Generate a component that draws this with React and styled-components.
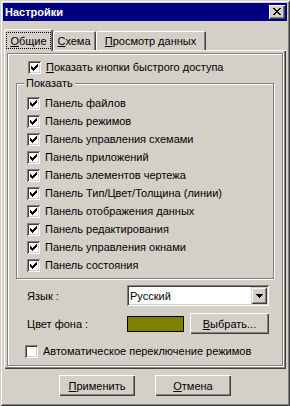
import React from 'react';
import styled, { createGlobalStyle } from 'styled-components';

const GlobalStyle = createGlobalStyle`
  html, body {
    margin: 0;
    padding: 0;
    background: #d4d0c8;
  }
  body {
    font-family: "Liberation Sans", Arial, sans-serif;
    font-size: 11px;
    color: #000;
  }
`;

const raised = `
  box-shadow: inset 1px 1px #fff, inset -1px -1px #404040, inset -2px -2px #808080;
`;
const sunken = `
  box-shadow: inset 1px 1px #808080, inset -1px -1px #fff, inset 2px 2px #404040, inset -2px -2px #d4d0c8;
`;
const etched = `
  border: 1px solid #808080;
  box-shadow: inset 1px 1px #fff, 1px 1px #fff;
`;

const Window = styled.div`
  width: 290px;
  height: 406px;
  box-sizing: border-box;
  padding: 3px;
  background: #d4d0c8;
  box-shadow: inset 1px 1px #d4d0c8, inset -1px -1px #404040, inset 2px 2px #fff, inset -2px -2px #808080;
  display: flex;
  flex-direction: column;
`;

const TitleBar = styled.div`
  height: 18px;
  background: #000080;
  display: flex;
  align-items: center;
  justify-content: space-between;
  padding: 0 2px;
`;

const Title = styled.span`
  color: #fff;
  font-weight: bold;
  font-size: 11px;
`;

const CloseButton = styled.div`
  width: 16px;
  height: 14px;
  background: #d4d0c8;
  ${raised}
  display: flex;
  align-items: center;
  justify-content: center;
  padding-bottom: 1px;
  box-sizing: border-box;
`;

const TabArea = styled.div`
  margin: 8px 1px 0 1px;
  display: flex;
  flex-direction: column;
`;

const TabStrip = styled.div`
  height: 21px;
  display: flex;
  align-items: flex-end;
`;

const Tab = styled.div`
  position: relative;
  z-index: ${p => (p.$active ? 1 : 0)};
  box-sizing: border-box;
  width: ${p => p.$w}px;
  height: ${p => (p.$active ? 22 : 19)}px;
  margin-bottom: ${p => (p.$active ? -1 : 0)}px;
  background: #d4d0c8;
  border-radius: 2px 2px 0 0;
  box-shadow: inset 1px 1px #fff, inset -1px 0 #404040, inset -2px 0 #808080;
  display: flex;
  padding: ${p => (p.$active ? '3px 2px 2px 2px' : '1px 2px 0 1px')};
`;

const TabLabel = styled.span`
  flex: 1;
  display: flex;
  align-items: center;
  justify-content: center;
  border: 1px dotted ${p => (p.$focused ? '#000' : 'transparent')};
`;

const U = styled.span`
  text-decoration: underline;
`;

const Panel = styled.div`
  box-sizing: border-box;
  height: 319px;
  padding: 3px;
  ${raised}
  display: flex;
`;

const Frame = styled.div`
  flex: 1;
  ${etched}
  display: flex;
  flex-direction: column;
`;

const CheckRow = styled.label`
  height: 18px;
  display: flex;
  align-items: center;
  gap: 5px;
  padding-left: ${p => p.$indent || 0}px;
  margin-top: ${p => p.$top || 0}px;
  white-space: nowrap;
`;

const Box = styled.span`
  width: 13px;
  height: 13px;
  flex: none;
  box-sizing: border-box;
  background: #fff;
  ${sunken}
  display: flex;
  align-items: center;
  justify-content: center;
`;

const Group = styled.div`
  position: relative;
  margin: 7px 8px 0 8px;
  padding: 10px 0 4px 10px;
  ${etched}
`;

const GroupLabel = styled.span`
  position: absolute;
  top: -7px;
  left: 7px;
  padding: 0 2px;
  line-height: 13px;
  background: #d4d0c8;
`;

const FieldRow = styled.div`
  height: 21px;
  display: flex;
  align-items: center;
  padding-left: 19px;
  margin-top: ${p => p.$top}px;
`;

const FieldLabel = styled.span`
  width: 100px;
  flex: none;
`;

const Select = styled.div`
  width: 142px;
  height: 21px;
  box-sizing: border-box;
  background: #fff;
  ${sunken}
  display: flex;
  align-items: center;
  padding: 2px;
`;

const SelectText = styled.span`
  flex: 1;
  padding-left: 1px;
`;

const DropButton = styled.div`
  width: 16px;
  height: 17px;
  box-sizing: border-box;
  background: #d4d0c8;
  box-shadow: inset 1px 1px #d4d0c8, inset -1px -1px #404040, inset 2px 2px #fff, inset -2px -2px #808080;
  display: flex;
  align-items: center;
  justify-content: center;
`;

const Swatch = styled.div`
  width: 57px;
  height: 16px;
  box-sizing: border-box;
  border: 1px solid #000;
  background: #808000;
`;

const Button = styled.div`
  width: ${p => p.$w}px;
  height: ${p => p.$h || 21}px;
  margin-left: ${p => p.$left || 0}px;
  box-sizing: border-box;
  background: #d4d0c8;
  ${raised}
  display: flex;
  align-items: center;
  justify-content: center;
`;

const Footer = styled.div`
  margin-top: 6px;
  display: flex;
  justify-content: center;
  gap: 20px;
`;

const Pixels = ({ rows, color = '#000' }) => (
  <svg width={rows[0].length} height={rows.length} shapeRendering="crispEdges">
    {rows.flatMap((r, y) =>
      r.split('').map((c, x) => (c === 'x' ? <rect key={`${x}-${y}`} x={x} y={y} width="1" height="1" fill={color} /> : null))
    )}
  </svg>
);

const CHECK = ['......x', '.....xx', 'x...xxx', 'xx.xxx.', 'xxxxx..', '.xxx...', '..x....'];
const CROSS = ['xx....xx', '.xx..xx.', '..xxxx..', '...xx...', '..xxxx..', '.xx..xx.', 'xx....xx'];
const ARROW = ['xxxxxxx', '.xxxxx.', '..xxx..', '...x...'];

const Check = ({ checked }) => <Box>{checked && <Pixels rows={CHECK} />}</Box>;

const panels = [
  'Панель файлов',
  'Панель режимов',
  'Панель управления схемами',
  'Панель приложений',
  'Панель элементов чертежа',
  'Панель Тип/Цвет/Толщина (линии)',
  'Панель отображения данных',
  'Панель редактирования',
  'Панель управления окнами',
  'Панель состояния',
];

export default function App() {
  return (
    <>
      <GlobalStyle />
      <Window>
        <TitleBar>
          <Title>Настройки</Title>
          <CloseButton>
            <Pixels rows={CROSS} />
          </CloseButton>
        </TitleBar>
        <TabArea>
          <TabStrip>
            <Tab $active $w={49}>
              <TabLabel $focused><U>О</U>бщие</TabLabel>
            </Tab>
            <Tab $w={43}>
              <TabLabel><U>С</U>хема</TabLabel>
            </Tab>
            <Tab $w={110}>
              <TabLabel><U>П</U>росмотр данных</TabLabel>
            </Tab>
          </TabStrip>
          <Panel>
            <Frame>
              <CheckRow $indent={20} $top={4}>
                <Check checked />
                <span><U>П</U>оказать кнопки быстрого доступа</span>
              </CheckRow>
              <Group>
                <GroupLabel>Показать</GroupLabel>
                {panels.map(name => (
                  <CheckRow key={name}>
                    <Check checked />
                    <span>{name}</span>
                  </CheckRow>
                ))}
              </Group>
              <FieldRow $top={6}>
                <FieldLabel>Язык :</FieldLabel>
                <Select>
                  <SelectText>Русский</SelectText>
                  <DropButton>
                    <Pixels rows={ARROW} />
                  </DropButton>
                </Select>
              </FieldRow>
              <FieldRow $top={7}>
                <FieldLabel>Цвет фона :</FieldLabel>
                <Swatch />
                <Button $w={79} $left={6}><span><U>В</U>ыбрать...</span></Button>
              </FieldRow>
              <CheckRow $indent={17} $top={8}>
                <Check />
                <span>Автоматическое переключение режимов</span>
              </CheckRow>
            </Frame>
          </Panel>
        </TabArea>
        <Footer>
          <Button $w={76}><span><U>П</U>рименить</span></Button>
          <Button $w={76}><span><U>О</U>тмена</span></Button>
        </Footer>
      </Window>
    </>
  );
}
